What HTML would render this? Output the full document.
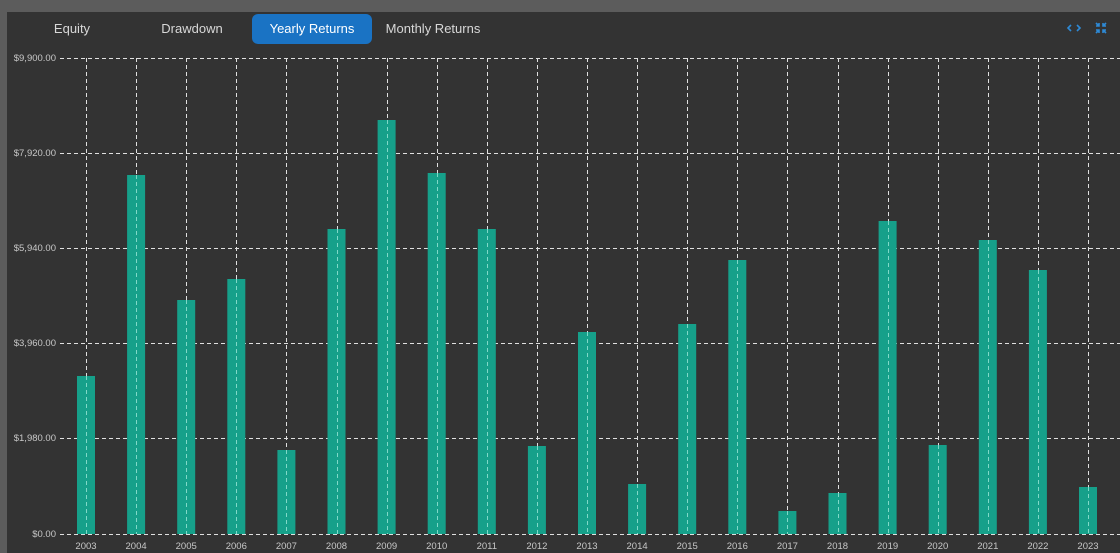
<!DOCTYPE html>
<html><head><style>
body{margin:0;width:1120px;height:553px;background:#5c5c5c;overflow:hidden;font-family:"Liberation Sans",sans-serif}
.panel{position:absolute;left:7px;top:12px;width:1113px;height:541px;background:#333333}
.tab{position:absolute;top:14px;height:30px;line-height:30px;color:#d8d8d8;font-size:13px;text-align:center}
</style></head><body>
<div class="panel"></div>
<div class="tab" style="left:38px;width:68px">Equity</div>
<div class="tab" style="left:150px;width:84px">Drawdown</div>
<div class="tab" style="left:252px;width:120px;background:#1a73c4;border-radius:6px;color:#fff">Yearly Returns</div>
<div class="tab" style="left:378px;width:110px">Monthly Returns</div>
<svg style="position:absolute;left:0;top:0" width="1120" height="553">
<g stroke="#2e8ad6" stroke-width="1.6" fill="none">
<path d="M1071 25l-3 3 3 3M1077 25l3 3-3 3"/>
<path d="M1096 23l3 3M1099 23v3h-3M1106 23l-3 3M1103 23v3h3M1096 33l3-3M1099 33v-3h-3M1106 33l-3-3M1103 33v-3h3"/>
</g>
<g font-size="9.5" fill="#c8c8c8" text-anchor="end">
<text x="56" y="61">$9,900.00</text><text x="56" y="156">$7,920.00</text><text x="56" y="251">$5,940.00</text><text x="56" y="346">$3,960.00</text><text x="56" y="441">$1,980.00</text><text x="56" y="537">$0.00</text>
</g>
<g stroke="#e0e0e0" stroke-dasharray="4,3" stroke-width="1">
<path d="M60 58.5H1120M60 153.5H1120M60 248.5H1120M60 343.5H1120M60 438.5H1120M60 534.5H1120"/>
</g>
<g id="bars" fill="#16a08a"></g>
<g id="vl" stroke="#e0e0e0" stroke-dasharray="4,3" stroke-width="1"></g>
<g id="lab" font-size="9.5" fill="#c8c8c8" text-anchor="middle"></g>
</svg>
<script>
var tops=[376,175,300,279,450,229,120,173,229,446,332,484,324,260,511,493,221,445,240,270,487];
var b=document.getElementById('bars'),v=document.getElementById('vl'),l=document.getElementById('lab'),ns='http://www.w3.org/2000/svg';
tops.forEach(function(t,i){var x=86+i*50.1;
var r=document.createElementNS(ns,'rect');r.setAttribute('x',x-9);r.setAttribute('y',t);r.setAttribute('width',18);r.setAttribute('height',534-t);b.appendChild(r);
var p=document.createElementNS(ns,'path');p.setAttribute('d','M'+(Math.round(x)+.5)+' 58V'+t);v.appendChild(p);
var q=document.createElementNS(ns,'path');q.setAttribute('d','M'+(Math.round(x)+.5)+' '+t+'V534');q.setAttribute('stroke','#7fd9c8');v.appendChild(q);
var tx=document.createElementNS(ns,'text');tx.setAttribute('x',x);tx.setAttribute('y',549);tx.textContent=2003+i;l.appendChild(tx);});
</script>
</body></html>
